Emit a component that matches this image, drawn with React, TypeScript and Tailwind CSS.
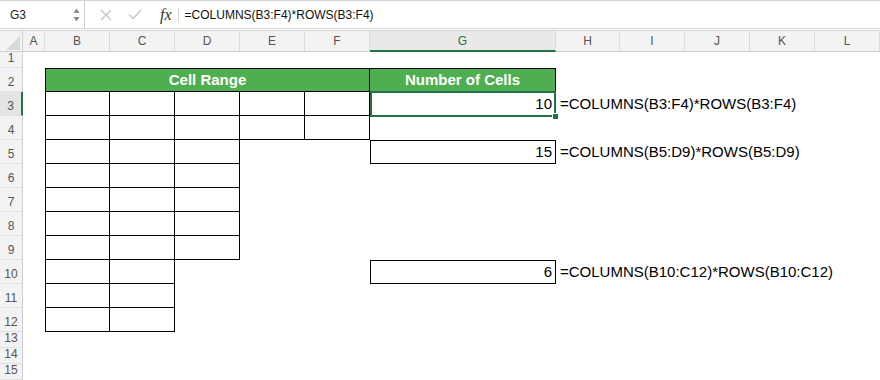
import React from "react";
import clsx from "clsx";

const COLS = ["A", "B", "C", "D", "E", "F", "G", "H", "I", "J", "K", "L"];
const ROWS = Array.from({ length: 15 }, (_, i) => i + 1);

function inS(r: number, c: number): boolean {
  if (r === 2) return c >= 1 && c <= 6;
  if (r === 3 || r === 4) return c >= 1 && c <= 5;
  if (r === 5) return (c >= 1 && c <= 3) || c === 6;
  if (r >= 6 && r <= 9) return c >= 1 && c <= 3;
  if (r === 10) return c === 1 || c === 2 || c === 6;
  if (r === 11 || r === 12) return c === 1 || c === 2;
  return false;
}

const values: Record<number, string> = { 3: "10", 5: "15", 10: "6" };
const formulas: Record<number, string> = {
  3: "=COLUMNS(B3:F4)*ROWS(B3:F4)",
  5: "=COLUMNS(B5:D9)*ROWS(B5:D9)",
  10: "=COLUMNS(B10:C12)*ROWS(B10:C12)",
};

function TopBar() {
  return (
    <div className="h-[29px] flex border-t border-b border-[#d4d4d4] bg-white">
      <div className="w-[85px] relative flex items-center border-r border-[#cfcfcf] pl-[10px] text-[12px] text-[#222]">
        G3
        <svg className="absolute left-[73px] top-[7px]" width="7" height="14" viewBox="0 0 7 14">
          <polygon points="0.5,5 6.5,5 3.5,0.5" fill="#8a8a8a" />
          <polygon points="0.5,9 6.5,9 3.5,13.5" fill="#8a8a8a" />
        </svg>
      </div>
      <div className="flex items-center flex-1">
        <svg className="ml-[15px]" width="12" height="12" viewBox="0 0 12 12">
          <path d="M1 1 L11 11 M11 1 L1 11" stroke="#c4c4c4" strokeWidth="1.4" fill="none" />
        </svg>
        <svg className="ml-[16px]" width="14" height="11" viewBox="0 0 14 11">
          <path d="M1 5.5 L5 9.5 L13 1" stroke="#c4c4c4" strokeWidth="1.4" fill="none" />
        </svg>
        <span className="ml-[18px] font-['Liberation_Serif',serif] italic text-[16px] text-[#333] leading-none">
          fx
        </span>
        <div className="ml-[6px] w-px h-[14px] bg-[#d8d8d8]" />
        <span className="ml-[6px] text-[12px] text-[#111] whitespace-nowrap">=COLUMNS(B3:F4)*ROWS(B3:F4)</span>
      </div>
    </div>
  );
}

function HeaderRow() {
  return (
    <>
      <div className="relative bg-[#f3f3f3] border-r border-b border-[#cfcfcf]">
        <svg className="absolute left-0 top-0" width="22" height="20" viewBox="0 0 22 20">
          <polygon points="20,5 20,19 6,19" fill="#d9d9d9" />
        </svg>
      </div>
      {COLS.map((c) => (
        <div
          key={c}
          className={clsx(
            "flex items-center justify-center text-[12px] border-r border-[#dcdcdc]",
            c === "G"
              ? "bg-[#e9e9e9] text-[#217346] border-b-2 border-b-[#217346]"
              : "bg-[#f3f3f3] text-[#555] border-b border-b-[#cfcfcf]"
          )}
        >
          {c}
        </div>
      ))}
    </>
  );
}

function Row({ r }: { r: number }) {
  const head = (
    <div
      key={`h${r}`}
      className={clsx(
        "flex items-end justify-center pb-[3px] text-[12px] leading-[12px] text-[#555] border-b border-b-[#e2e2e2]",
        r === 3 ? "bg-[#e4e4e4] border-r-2 border-r-[#217346]" : "bg-[#f3f3f3] border-r border-r-[#cfcfcf]"
      )}
    >
      {r}
    </div>
  );

  if (r === 2) {
    return (
      <>
        {head}
        <div />
        <div className="col-span-5 flex items-center justify-center bg-[#4fae4f] border border-black text-white font-bold text-[15px]">
          Cell Range
        </div>
        <div className="flex items-center justify-center bg-[#4fae4f] border-t border-r border-b border-black text-white font-bold text-[15px]">
          Number of Cells
        </div>
        {[7, 8, 9, 10, 11].map((c) => (
          <div key={c} />
        ))}
      </>
    );
  }

  return (
    <>
      {head}
      {COLS.map((_, c) => {
        const s = inS(r, c);
        const cls = clsx(
          "relative",
          s && "border-r border-b border-black",
          s && !inS(r, c - 1) && "border-l",
          s && !inS(r - 1, c) && "border-t"
        );
        if (c === 6 && values[r]) {
          return (
            <div key={c} className={clsx(cls, "flex items-center justify-end text-[15px]", r === 3 ? "pr-[4px]" : "pr-[3px]")}>
              {values[r]}
              {r === 3 && (
                <>
                  <div className="absolute left-0 right-0 -top-px -bottom-px border-2 border-[#217346] z-10" />
                  <div className="absolute -right-[3px] -bottom-[4px] w-[7px] h-[7px] bg-[#217346] border border-white z-20" />
                </>
              )}
            </div>
          );
        }
        if (c === 7 && formulas[r]) {
          return (
            <div key={c} className={clsx(cls, "flex items-center pl-[4px] text-[15px] whitespace-nowrap overflow-visible")}>
              {formulas[r]}
            </div>
          );
        }
        return <div key={c} className={cls} />;
      })}
    </>
  );
}

export default function App() {
  return (
    <div className="w-[880px] h-[380px] overflow-hidden bg-white font-['Liberation_Sans',Arial,sans-serif] text-black">
      <TopBar />
      <div className="h-px bg-white" />
      <div className="grid grid-cols-[23px_22px_65px_65px_65px_65px_65px_186px_64px_65px_65px_65px_65px] grid-rows-[21px_16px_repeat(11,24px)_16px_16px_16px] border-t border-[#d4d4d4]">
        <HeaderRow />
        {ROWS.map((r) => (
          <Row key={r} r={r} />
        ))}
      </div>
    </div>
  );
}
